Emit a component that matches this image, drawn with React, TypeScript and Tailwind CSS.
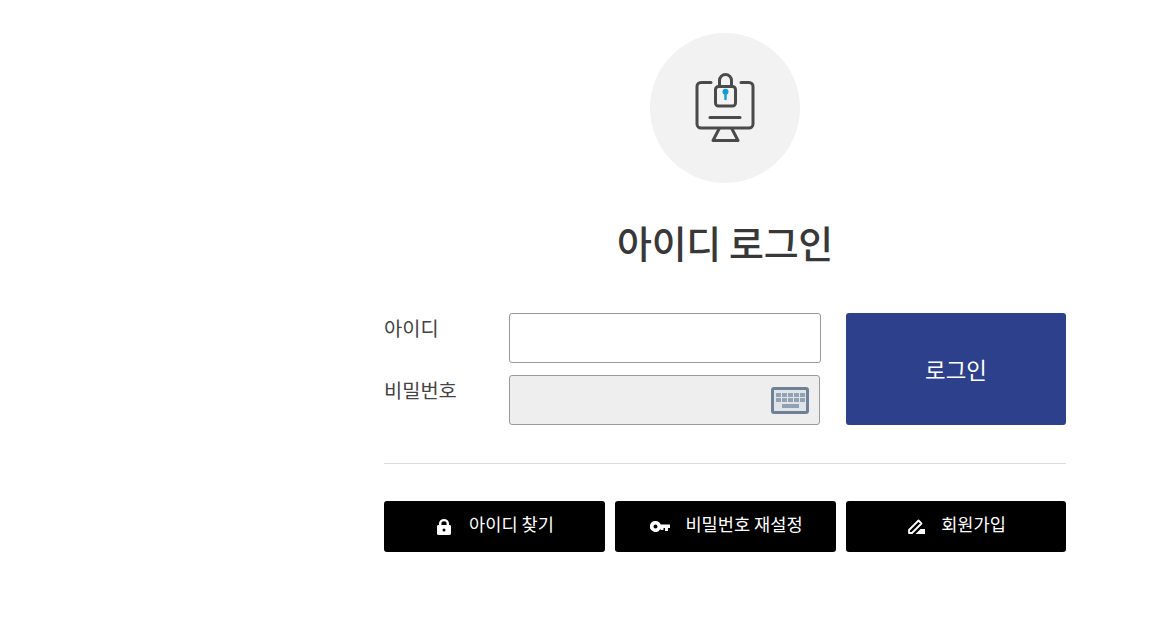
import React from "react";

function MonitorLockIcon() {
  return (
    <svg width="62" height="72" viewBox="0 0 62 72" fill="none" className="block">
      <g stroke="#4a4a4a" strokeWidth="3" strokeLinecap="round" strokeLinejoin="round">
        <path d="M17 10.500H7a4 4 0 0 0-4 4V52a4 4 0 0 0 4 4h48a4 4 0 0 0 4-4V14.500a4 4 0 0 0-4-4H47" />
        <rect x="21.500" y="14.500" width="20" height="19.500" rx="3" />
        <path d="M25.500 14V8.500a6 6 0 0 1 12 0V14" />
        <path d="M16 45.500h30" />
        <path d="M25 57l-6 11.500h25L38 57" />
      </g>
      <circle cx="31.500" cy="19.800" r="3" fill="#0f9be0" />
      <path d="M31.500 20v7" stroke="#0f9be0" strokeWidth="2.400" strokeLinecap="round" />
    </svg>
  );
}

function KeyboardIcon() {
  const keys = [0, 1, 2, 3, 4];
  return (
    <div className="flex h-[27px] w-[38px] flex-col items-center gap-[1px] rounded-[3px] border-[3px] border-[#6f8196] bg-[#dfe4e9] pt-[3px]">
      <div className="flex gap-[1px]">
        {keys.map((k) => (
          <span key={k} className="h-[4px] w-[5px] bg-[#93a2b2]" />
        ))}
      </div>
      <div className="flex gap-[1px]">
        {keys.map((k) => (
          <span key={k} className="h-[4px] w-[5px] bg-[#93a2b2]" />
        ))}
      </div>
      <span className="mt-[1px] h-[4px] w-[17px] bg-[#93a2b2]" />
    </div>
  );
}

function LockIcon() {
  return (
    <svg width="14" height="16" viewBox="0 0 14 16" className="block">
      <path
        fill="#fff"
        fillRule="evenodd"
        d="M2 6V4.600a5 4.600 0 0 1 10 0V6h.6c.8 0 1.400.6 1.400 1.400v7.200c0 .8-.6 1.400-1.400 1.400H1.400C.6 16 0 15.400 0 14.600V7.400C0 6.600.6 6 1.400 6zm2.400 0h5.200V4.600a2.600 2.400 0 0 0-5.200 0zM7 9.500a1.500 1.500 0 1 0 0 3 1.500 1.500 0 0 0 0-3z"
      />
    </svg>
  );
}

function KeyIcon() {
  return (
    <svg width="20" height="11" viewBox="0 0 20 11" className="block">
      <path
        fill="#fff"
        fillRule="evenodd"
        d="M5.500 0a5.500 5.500 0 0 1 5.200 3.500H20v3.500h-2v3h-3V7h-1.500v2H10.500V7.500A5.500 5.500 0 1 1 5.500 0zm0 3.500a2 2 0 1 0 0 4 2 2 0 0 0 0-4z"
      />
    </svg>
  );
}

function PenIcon() {
  return (
    <svg width="17" height="15" viewBox="0 0 17 15" className="block">
      <path d="M1 11 10.500 1.500 13.500 4.500 4 14H1z" fill="none" stroke="#fff" strokeWidth="1.800" strokeLinejoin="round" />
      <path d="M7.500 15l5-5H17v5z" fill="#fff" />
    </svg>
  );
}

function LinkButton({ icon, label, gap, wide }: { icon: React.ReactNode; label: string; gap: string; wide?: boolean }) {
  return (
    <button className={`flex h-[51px] items-center justify-center rounded-[3px] bg-black pl-[2px] text-[17.6px] text-white ${wide ? "w-[221px]" : "w-[220px]"} ${gap}`}>
      {icon}
      <span className="pb-[4px]">{label}</span>
    </button>
  );
}

export default function App() {
  return (
    <div
      className="min-h-[617px] w-full overflow-hidden bg-white text-[#333]"
      style={{ fontFamily: '"Noto Sans CJK KR", "Noto Sans", sans-serif' }}
    >
      <div className="ml-[384px] flex w-[682px] flex-col pt-[33px]">
        <div className="flex h-[150px] w-[150px] items-center justify-center self-center rounded-full bg-[#f2f2f2]">
          <MonitorLockIcon />
        </div>
        <h1 className="mt-[30px] h-[58px] text-center text-[38px] leading-[58px] font-medium tracking-[-0.35px] text-[#383838]">
          아이디 로그인
        </h1>
        <div className="mt-[42px] flex">
          <div className="flex w-[125px] flex-col gap-[12px] text-[19.8px] text-[#444]">
            <label className="h-[50px] leading-[30px]">아이디</label>
            <label className="h-[50px] leading-[30px]">비밀번호</label>
          </div>
          <div className="flex w-[312px] flex-col gap-[12px]">
            <input className="h-[50px] w-full rounded-[3px] border border-[#999] bg-white" />
            <div className="flex h-[50px] w-[311px] items-center justify-end rounded-[3px] border border-[#999] bg-[#eee] pr-[10px]">
              <KeyboardIcon />
            </div>
          </div>
          <button className="ml-[25px] h-[112px] w-[220px] rounded-[3px] bg-[#2c408c] pt-[1px] text-[22.4px] text-white">
            로그인
          </button>
        </div>
        <div className="mt-[38px] h-px w-full bg-[#ddd]" />
        <div className="mt-[37px] flex gap-[10px]">
          <LinkButton wide icon={<LockIcon />} label="아이디 찾기" gap="gap-[18px]" />
          <LinkButton wide icon={<KeyIcon />} label="비밀번호 재설정" gap="gap-[15px]" />
          <LinkButton icon={<PenIcon />} label="회원가입" gap="gap-[16px]" />
        </div>
      </div>
    </div>
  );
}
